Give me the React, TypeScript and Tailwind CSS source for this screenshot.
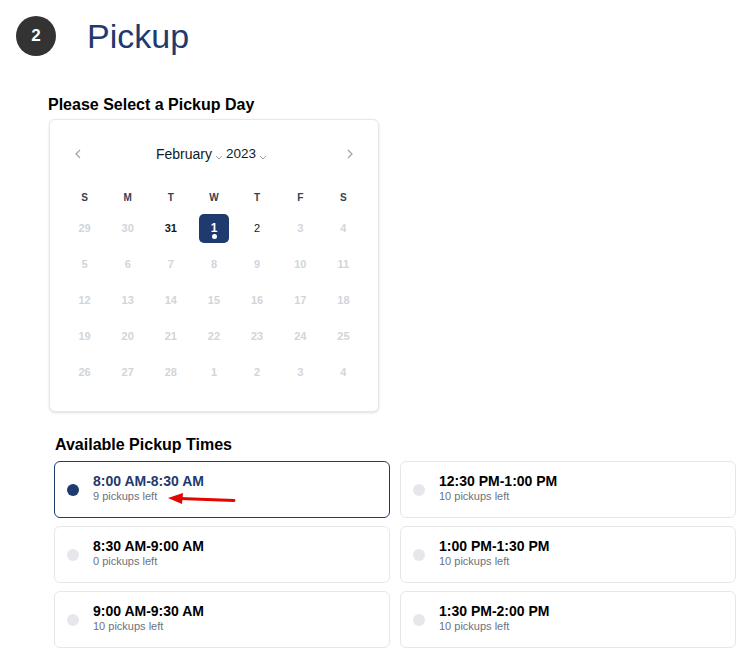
const NAVY = "#1e3a6e";

type Slot = { time: string; left: number };

const leftSlots: Slot[] = [
  { time: "8:00 AM-8:30 AM", left: 9 },
  { time: "8:30 AM-9:00 AM", left: 0 },
  { time: "9:00 AM-9:30 AM", left: 10 },
];

const rightSlots: Slot[] = [
  { time: "12:30 PM-1:00 PM", left: 10 },
  { time: "1:00 PM-1:30 PM", left: 10 },
  { time: "1:30 PM-2:00 PM", left: 10 },
];

const weekdays = ["S", "M", "T", "W", "T", "F", "S"];

const days: { n: number; muted?: boolean; bold?: boolean; selected?: boolean }[][] = [
  [
    { n: 29, muted: true },
    { n: 30, muted: true },
    { n: 31, bold: true },
    { n: 1, selected: true },
    { n: 2 },
    { n: 3, muted: true },
    { n: 4, muted: true },
  ],
  [5, 6, 7, 8, 9, 10, 11].map((n) => ({ n, muted: true })),
  [12, 13, 14, 15, 16, 17, 18].map((n) => ({ n, muted: true })),
  [19, 20, 21, 22, 23, 24, 25].map((n) => ({ n, muted: true })),
  [26, 27, 28, 1, 2, 3, 4].map((n) => ({ n, muted: true })),
];

function SmallChevron() {
  return (
    <svg width="8" height="5" viewBox="0 0 8 5" className="mt-[6px] mx-[3px]">
      <polyline points="1,1 4,4 7,1" fill="none" stroke="#9ca3af" strokeWidth="1" />
    </svg>
  );
}

function Calendar() {
  return (
    <div className="ml-px w-[330px] h-[293px] rounded-md border border-[#e5e7eb] shadow-sm bg-white px-[13px]">
      <div className="mt-[23px] h-[22px] flex items-center justify-between px-[12px]">
        <svg width="6" height="10" viewBox="0 0 6 10">
          <polyline points="5,1 1,5 5,9" fill="none" stroke="#9ca3af" strokeWidth="1.2" />
        </svg>
        <div className="flex items-center text-[14px] text-[#111827] mr-[2px]">
          <span>February</span>
          <SmallChevron />
          <span className="text-[13.5px]">2023</span>
          <SmallChevron />
        </div>
        <svg width="6" height="10" viewBox="0 0 6 10">
          <polyline points="1,1 5,5 1,9" fill="none" stroke="#9ca3af" strokeWidth="1.2" />
        </svg>
      </div>
      <div className="mt-[22px] grid grid-cols-7 h-[20px] items-center">
        {weekdays.map((d, i) => (
          <div key={i} className="text-center text-[10px] font-bold text-[#374151]">
            {d}
          </div>
        ))}
      </div>
      <div className="mt-[3px]">
        {days.map((row, r) => (
          <div key={r} className="grid grid-cols-7 h-[36px] items-center">
            {row.map((d, i) =>
              d.selected ? (
                <div key={i} className="flex justify-center">
                  <div
                    className="relative w-[30px] h-[29px] rounded-[5px] flex justify-center pt-[8px] text-[12px] font-bold text-white leading-none"
                    style={{ backgroundColor: NAVY }}
                  >
                    {d.n}
                    <span className="absolute bottom-[4px] left-[13px] w-[5px] h-[5px] rounded-full bg-white" />
                  </div>
                </div>
              ) : (
                <div
                  key={i}
                  className={`text-center text-[11px] ${
                    d.muted
                      ? "text-[#d1d5db] font-bold"
                      : d.bold
                      ? "text-[#111827] font-bold"
                      : "text-[#111827]"
                  }`}
                >
                  {d.n}
                </div>
              )
            )}
          </div>
        ))}
      </div>
    </div>
  );
}

function SlotCard({ slot, selected }: { slot: Slot; selected?: boolean }) {
  return (
    <div
      className={`h-[57px] rounded-md border bg-white flex items-center pl-[12px] ${
        selected ? "border-[#1e3a6e]" : "border-[#e5e7eb]"
      }`}
    >
      <span
        className={`w-[12px] h-[12px] rounded-full shrink-0 ${
          selected ? "bg-[#1e3a6e]" : "bg-[#e5e7eb]"
        }`}
      />
      <div className="ml-[14px] pb-[4px]">
        <div
          className={`text-[14px] font-bold leading-[16px] ${
            selected ? "text-[#1e3a6e]" : "text-black"
          }`}
        >
          {slot.time}
        </div>
        <div className="text-[11px] leading-[14px] text-[#6b7280]">
          {slot.left} pickups left
        </div>
      </div>
    </div>
  );
}

export default function App() {
  return (
    <div className="relative w-[756px] h-[652px] bg-white overflow-hidden font-['Liberation_Sans',Arial,sans-serif]">
      <div className="flex items-center pt-4 pl-4">
        <div className="w-10 h-10 rounded-full bg-[#333333] flex items-center justify-center text-white text-[17px] font-bold">
          2
        </div>
        <h1 className="ml-[31px] text-[34px] leading-[40px] text-[#1e3a6e]">Pickup</h1>
      </div>

      <div className="ml-[48px] mt-[39px]">
        <h2 className="text-[16px] font-bold leading-[20px] text-black">
          Please Select a Pickup Day
        </h2>
        <div className="mt-[4px]">
          <Calendar />
        </div>
      </div>

      <div className="ml-[54px] mr-[20px] mt-[23px]">
        <h2 className="ml-px text-[16px] font-bold leading-[20px] text-black">
          Available Pickup Times
        </h2>
        <div className="mt-[6px] grid grid-cols-2 gap-x-[10px]">
          <div className="flex flex-col gap-[8px]">
            {leftSlots.map((s, i) => (
              <SlotCard key={s.time} slot={s} selected={i === 0} />
            ))}
          </div>
          <div className="flex flex-col gap-[8px]">
            {rightSlots.map((s) => (
              <SlotCard key={s.time} slot={s} />
            ))}
          </div>
        </div>
      </div>

      <svg
        className="absolute left-[166px] top-[490px]"
        width="72"
        height="18"
        viewBox="0 0 72 18"
      >
        <line x1="14" y1="8.5" x2="68" y2="10.5" stroke="#e10600" strokeWidth="3" strokeLinecap="round" />
        <polygon points="2,8 17,3 16,14" fill="#e10600" />
      </svg>
    </div>
  );
}
